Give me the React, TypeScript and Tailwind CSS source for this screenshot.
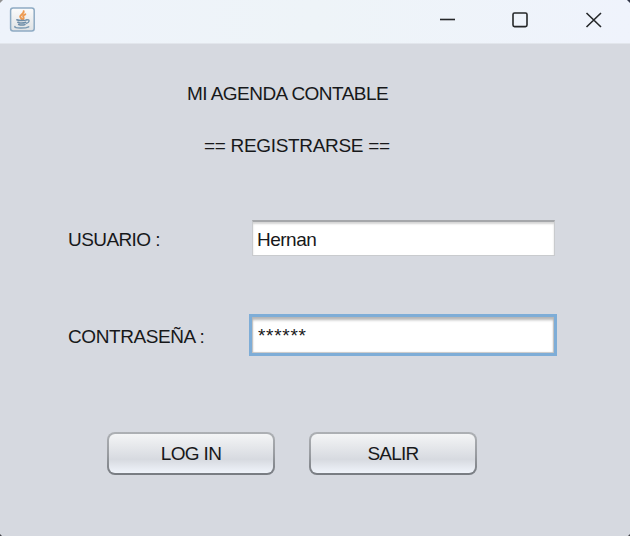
import React from "react";

function JavaIcon() {
  return (
    <svg width="28" height="28" viewBox="0 0 28 28" fill="none">
      <defs>
        <linearGradient id="tile" x1="0" y1="0" x2="0" y2="1">
          <stop offset="0" stopColor="#fbfbfb" />
          <stop offset="1" stopColor="#dfe2e4" />
        </linearGradient>
      </defs>
      <rect x="2.6" y="2" width="23.6" height="23" rx="2.5" fill="url(#tile)" stroke="#8eabc4" strokeWidth="1.5" />
      <path d="M15.7 5.2c.8 2.3-3.600 3.300-3.500 5.300 0 1.100 1.300 1.900 1.600 2.900M17.300 8.300c-1.900.9-2.700 1.700-1.800 3 .4.700.1 1.500-.4 2.100" stroke="#ee9a50" strokeWidth="2" strokeLinecap="round" />
      <path d="M8.800 13.700c2.600 1.200 7.600 1.100 9.900.2M9.800 16.200c2.400 1.100 5.800 1 8 .1M10.600 18.500c1.900.7 4.600.7 6.400.1" stroke="#6d8da8" strokeWidth="1.500" strokeLinecap="round" />
      <path d="M18.800 13.800c3.200-.7 2.900 2.600-.3 3.600M7 20.600c-1.500 1.700 10 2.200 13.700.2" stroke="#7b9ab3" strokeWidth="1.500" strokeLinecap="round" />
    </svg>
  );
}

function TitleBar() {
  return (
    <header className="flex h-[44px] items-start justify-between border-b border-[#e2e6ec] bg-linear-to-r from-[#eef3fb] via-[#eef4f8] to-[#eff3fc]">
      <div className="pt-[6px] pl-[8px]">
        <JavaIcon />
      </div>
      <div className="flex pt-[9px] pr-[25px]">
        <svg width="170" height="22" viewBox="0 0 170 22" fill="none" stroke="#252729" strokeWidth="1.600">
          <path d="M5 10.500H20" />
          <rect x="78" y="4" width="14" height="13.600" rx="1.500" />
          <path d="M151.500 4L166 18M166 4L151.500 18" />
        </svg>
      </div>
    </header>
  );
}

function PushButton({ children, className }: { children: React.ReactNode; className: string }) {
  return (
    <button className="h-[43px] w-[168px] rounded-[8px] bg-linear-to-b from-[#adb0b4] via-[#9a9da2] to-[#787c82] p-[2px]">
      <span className="flex h-full items-center justify-center rounded-[6px] bg-linear-to-b from-[#f4f5f6] from-0% via-[#d7dae0] via-65% to-[#f0f4fb] to-100%">
        <span className={className}>{children}</span>
      </span>
    </button>
  );
}

export default function App() {
  return (
    <div className="relative h-[536px] w-[630px] overflow-hidden bg-[#d6d9e0] font-['Liberation_Sans',Arial,sans-serif] text-[19px] leading-[22px] whitespace-pre text-[#17181a]">
      <TitleBar />
      <main>
        <h1 className="mt-[39px] ml-[187px] tracking-[-0.54px]">MI AGENDA CONTABLE</h1>
        <h2 className="mt-[30px] ml-[204px] tracking-[-0.32px]">== REGISTRARSE ==</h2>
        <div className="mt-[63px] flex h-[36px] items-center pl-[68px]">
          <label className="w-[184px] pt-[4px] tracking-[-0.58px]">USUARIO :</label>
          <div className="h-[36px] w-[303px] border border-t-2 border-[#c9cbce] border-t-[#a5a7aa] bg-white pt-[7px] pl-[4px] tracking-[-0.5px] shadow-[inset_0_2px_2px_#d5d5d5]">
            Hernan
          </div>
        </div>
        <div className="mt-[58px] flex h-[42px] items-center pl-[68px]">
          <label className="w-[181px] pt-[3px] tracking-[-0.42px]">CONTRASEÑA :</label>
          <div className="h-[42px] w-[308px] border-[3px] border-[#7eadd7] bg-white pt-[8px] pl-[6px] tracking-[0.700px] shadow-[inset_0_3px_3px_#b5b5b5,inset_1px_0_1px_#c8c8c8,inset_-1px_-1px_1px_#c8c8c8]">
            ******
          </div>
        </div>
        <div className="mt-[76px] flex gap-[34px] pl-[107px]">
          <PushButton className="pt-[1px] tracking-[-0.65px]">LOG IN</PushButton>
          <PushButton className="pt-[1px] tracking-[-0.75px]">SALIR</PushButton>
        </div>
      </main>
      <svg className="pointer-events-none absolute inset-0" width="630" height="536">
        <path d="M0 0H3L0 3Z" fill="#929292" />
        <path d="M627 0H630V3Z" fill="#34394a" />
        <path d="M0 534L2 536H0ZM630 534V536H628Z" fill="#44464a" />
      </svg>
    </div>
  );
}
